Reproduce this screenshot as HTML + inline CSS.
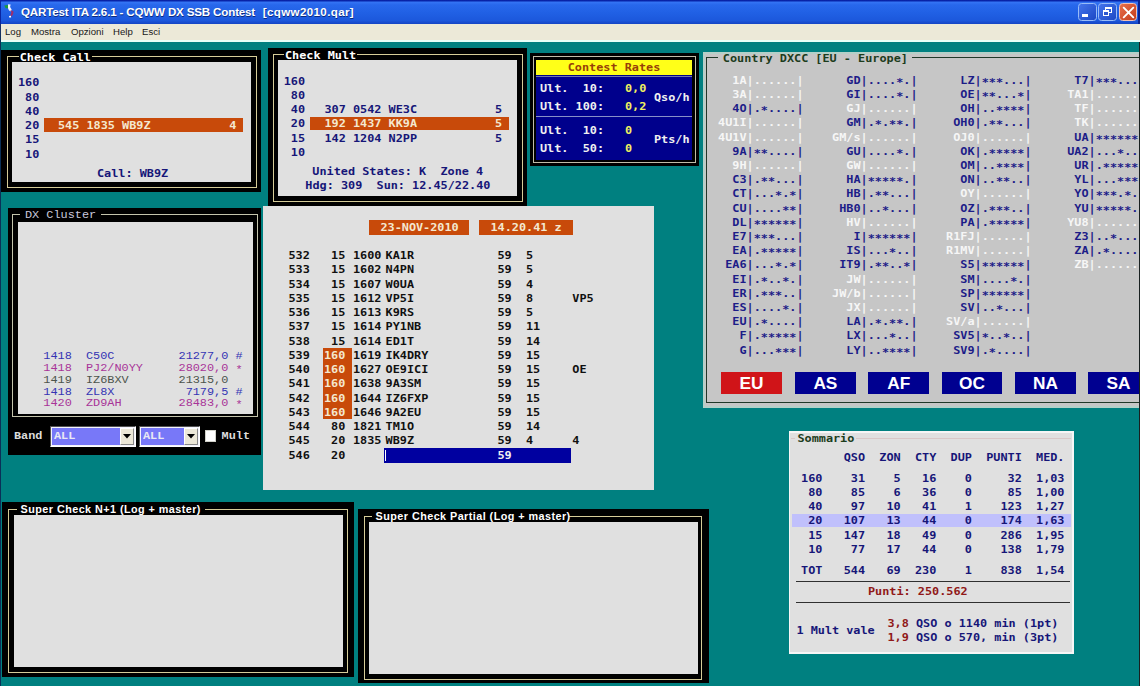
<!DOCTYPE html>
<html><head><meta charset="utf-8"><title>QARTest ITA 2.6.1 - CQWW DX SSB Contest</title>
<style>
*{margin:0;padding:0}
html,body{width:1140px;height:686px;overflow:hidden;background:#008080}
#root{position:relative;width:1140px;height:686px;overflow:hidden;background:#008080}
.b,.t,.c,.m,.s,.btn{position:absolute}
.t{font-family:"DejaVu Sans Mono","Liberation Mono",monospace;font-weight:bold;font-size:11.83px;line-height:14.25px;height:14.25px;white-space:pre;letter-spacing:0;transform:scaleY(.94);transform-origin:0 11.2px}
.t i{font-style:normal;position:relative;top:1.6px}
.c{font-family:"Liberation Mono",monospace;font-size:11.875px;line-height:13px;height:13px;white-space:pre;transform:scaleY(.9);transform-origin:0 10.2px}
.c i{font-style:normal;position:relative;top:1.8px}
.cb{font-weight:bold}
.m{font-family:"Liberation Sans",sans-serif;font-size:9.6px;line-height:12px;top:26px;color:#181818;white-space:pre}
.s{font-family:"Liberation Sans",sans-serif;font-weight:bold;font-size:10.8px;letter-spacing:0.45px;line-height:12px;color:#fff;white-space:pre}
.btn{top:372px;width:60.8px;height:21.7px;color:#fff;font-family:"Liberation Sans",sans-serif;font-weight:bold;font-size:17.3px;line-height:23.4px;text-align:center}
#tb{position:absolute;left:0;top:0;width:1140px;height:23.6px;background:linear-gradient(180deg,#06189c 0%,#0a2cb0 4%,#3474f4 9%,#2868ec 20%,#2060e4 55%,#1c58dc 85%,#1444c4 100%)}
.tt{position:absolute;top:5px;font-family:"Liberation Sans",sans-serif;font-weight:bold;font-size:11.6px;line-height:14px;color:#fff;white-space:pre;text-shadow:0.5px 0.5px 0 #0a2a80}
#mb{position:absolute;left:0;top:23.6px;width:1140px;height:18px;background:#ece9d8;border-bottom:2px solid #e8fff8;box-sizing:border-box}
.wb{width:18.6px;height:18.4px;border:1px solid #fff;border-radius:3.5px;box-sizing:border-box}
</style></head>
<body><div id="root">
<div id="tb"></div>
<div class="tt" style="left:21px;letter-spacing:-0.17px">QARTest ITA 2.6.1 - CQWW DX SSB Contest</div>
<div class="tt" style="left:262.8px;letter-spacing:0.35px">[cqww2010.qar]</div>
<svg class="b" style="left:0;top:0" width="18" height="22" viewBox="0 0 18 22"><path d="M4.3 5.6 L8 5 L8 8.2 L5.6 8.2 Z" fill="#1a9a3a"/><path d="M8 4.2 L10.6 4.5 L10.1 7 L11.6 9.6 L11.2 11.6 L9 10.6 L8 8.2 Z" fill="#f2f2ff"/><path d="M10.4 10 L13.6 11.6 L13.1 14 L11.6 16.6 L10.4 15.2 L11.4 12.6 Z" fill="#a02c6c"/><path d="M9 16 L11 15.7 L11.1 17.5 L9.2 17.6Z" fill="#fff"/></svg>
<div class="b wb" style="left:1078.0px;top:3px;background:linear-gradient(135deg,#4474ec,#1c48c4);border-color:#98bcf8"></div>
<div class="b wb" style="left:1098.2px;top:3px;background:linear-gradient(135deg,#4474ec,#1c48c4);border-color:#98bcf8"></div>
<div class="b wb" style="left:1118.6px;top:3px;background:linear-gradient(135deg,#e8704c,#c43c1c);border-color:#f4c0b0"></div>
<div class="b" style="left:1082px;top:13.8px;width:6.4px;height:3px;background:#fff"></div>
<div class="b" style="left:1105.3px;top:7px;width:6.4px;height:5.5px;border:1px solid #fff;border-top-width:2px;box-sizing:border-box"></div>
<div class="b" style="left:1102.5px;top:10px;width:6.6px;height:5.8px;border:1px solid #fff;border-top-width:2px;box-sizing:border-box;background:#2c58d0"></div>
<svg class="b" style="left:1121.5px;top:5.5px" width="13" height="13" viewBox="0 0 13 13"><path d="M1.7 1.7 L11.3 11.3 M11.3 1.7 L1.7 11.3" stroke="#fff" stroke-width="1.9" stroke-linecap="round"/></svg>
<div class="b" style="left:1138.2px;top:0;width:2px;height:42px;background:#0a2490"></div>
<div id="mb"></div>
<div class="m" style="left:5px">Log</div>
<div class="m" style="left:31px">Mostra</div>
<div class="m" style="left:71px">Opzioni</div>
<div class="m" style="left:113px">Help</div>
<div class="m" style="left:142px">Esci</div>
<div class="b" style="left:0;top:0;width:1.2px;height:686px;background:linear-gradient(180deg,#0a24a0 0,#0a24a0 24px,#203068 24px,#0a3058 42px,#0a3058 100%)"></div>
<div class="b" style="left:1.00px;top:50.00px;width:260.00px;height:142.00px;background:#000;"></div>
<div class="b" style="left:7.00px;top:56.00px;width:250.30px;height:131.70px;border:1px solid #d6cc98;box-sizing:border-box"></div>
<div class="b" style="left:12.00px;top:62.00px;width:239.00px;height:119.50px;background:#e0e0e0;"></div>
<div class="b" style="left:19.00px;top:54.00px;width:72.50px;height:6.00px;background:#000;"></div>
<div class="t" style="left:19.70px;top:49.70px;color:#fff;">Check Call</div>
<div class="t" style="left:17.90px;top:75.35px;color:#161678;">160</div>
<div class="t" style="left:17.90px;top:89.60px;color:#161678;"> 80</div>
<div class="t" style="left:17.90px;top:103.85px;color:#161678;"> 40</div>
<div class="t" style="left:17.90px;top:118.10px;color:#161678;"> 20</div>
<div class="t" style="left:17.90px;top:132.35px;color:#161678;"> 15</div>
<div class="t" style="left:17.90px;top:146.60px;color:#161678;"> 10</div>
<div class="b" style="left:44.00px;top:118.00px;width:198.50px;height:14.00px;background:#c84a0a;"></div>
<div class="t" style="left:58.00px;top:118.10px;color:#f4e8d0;">545 1835 WB9Z</div>
<div class="t" style="left:229.30px;top:118.10px;color:#f4e8d0;">4</div>
<div class="t" style="left:97.00px;top:166.30px;color:#161678;">Call: WB9Z</div>
<div class="b" style="left:268.00px;top:48.00px;width:259.00px;height:159.00px;background:#000;"></div>
<div class="b" style="left:273.00px;top:54.00px;width:250.00px;height:148.00px;border:1px solid #d6cc98;box-sizing:border-box"></div>
<div class="b" style="left:277.50px;top:60.00px;width:239.50px;height:136.00px;background:#e0e0e0;"></div>
<div class="b" style="left:284.00px;top:52.00px;width:73.00px;height:6.00px;background:#000;"></div>
<div class="t" style="left:285.00px;top:47.80px;color:#fff;">Check Mult</div>
<div class="t" style="left:283.70px;top:73.50px;color:#161678;">160</div>
<div class="t" style="left:283.70px;top:87.75px;color:#161678;"> 80</div>
<div class="t" style="left:283.70px;top:102.00px;color:#161678;"> 40</div>
<div class="t" style="left:283.70px;top:116.25px;color:#161678;"> 20</div>
<div class="t" style="left:283.70px;top:130.50px;color:#161678;"> 15</div>
<div class="t" style="left:283.70px;top:144.75px;color:#161678;"> 10</div>
<div class="b" style="left:309.50px;top:116.50px;width:199.30px;height:13.40px;background:#c84a0a;"></div>
<div class="t" style="left:324.50px;top:102.00px;color:#161678;">307 0542 WE3C</div>
<div class="t" style="left:495.00px;top:102.00px;color:#161678;">5</div>
<div class="t" style="left:324.50px;top:116.25px;color:#f4e8d0;">192 1437 KK9A</div>
<div class="t" style="left:495.00px;top:116.25px;color:#f4e8d0;">5</div>
<div class="t" style="left:324.50px;top:130.50px;color:#161678;">142 1204 N2PP</div>
<div class="t" style="left:495.00px;top:130.50px;color:#161678;">5</div>
<div class="t" style="left:312.30px;top:164.40px;color:#161678;">United States: K  Zone 4</div>
<div class="t" style="left:305.30px;top:178.15px;color:#161678;">Hdg: 309  Sun: 12.45/22.40</div>
<div class="b" style="left:529.50px;top:52.50px;width:169.50px;height:113.30px;background:#000;"></div>
<div class="b" style="left:533px;top:56.2px;width:163px;height:106.6px;border:1px solid #c0bca8;box-sizing:border-box"></div>
<div class="b" style="left:536.00px;top:59.70px;width:156.00px;height:100.00px;background:#00008c;"></div>
<div class="b" style="left:536.00px;top:59.70px;width:156.00px;height:15.00px;background:#ffff18;"></div>
<div class="b" style="left:536.00px;top:75.60px;width:156.00px;height:1.00px;background:#7078b0;"></div>
<div class="t" style="left:567.70px;top:60.20px;color:#984008;">Contest Rates</div>
<div class="b" style="left:536.00px;top:116.20px;width:156.00px;height:1.20px;background:#8890c8;"></div>
<div class="t" style="left:540.00px;top:81.20px;color:#f0f0f0;">Ult.  10:</div>
<div class="t" style="left:625.00px;top:81.20px;color:#f0f060;">0,0</div>
<div class="t" style="left:540.00px;top:98.60px;color:#f0f0f0;">Ult. 100:</div>
<div class="t" style="left:625.00px;top:98.60px;color:#f0f060;">0,2</div>
<div class="t" style="left:654.00px;top:89.90px;color:#f0f0f0;">Qso/h</div>
<div class="t" style="left:540.00px;top:123.30px;color:#f0f0f0;">Ult.  10:</div>
<div class="t" style="left:625.00px;top:123.30px;color:#f0f060;">0</div>
<div class="t" style="left:540.00px;top:141.20px;color:#f0f0f0;">Ult.  50:</div>
<div class="t" style="left:625.00px;top:141.20px;color:#f0f060;">0</div>
<div class="t" style="left:654.00px;top:132.40px;color:#f0f0f0;">Pts/h</div>
<div class="b" style="left:702.70px;top:52.00px;width:440.00px;height:355.60px;background:#b4d0c8;"></div>
<div class="b" style="left:705.00px;top:54.00px;width:440.00px;height:351.50px;background:#c6c6c6;"></div>
<div class="b" style="left:705.8px;top:57.2px;width:440px;height:345.8px;border:1px solid #203828;box-sizing:border-box"></div>
<div class="b" style="left:718.00px;top:54.00px;width:194.00px;height:8.00px;background:#c6c6c6;"></div>
<div class="t" style="left:722.80px;top:51.10px;color:#1c3c1c;">Country DXCC [EU - Europe]</div>
<div class="t" style="left:711.00px;top:72.90px;color:#f6f6f6;">   1A|......|</div>
<div class="t" style="left:711.00px;top:87.09px;color:#f6f6f6;">   3A|......|</div>
<div class="t" style="left:711.00px;top:101.28px;color:#1c1c88;">   4O|.<i>*</i>....|</div>
<div class="t" style="left:711.00px;top:115.47px;color:#f6f6f6;"> 4U1I|......|</div>
<div class="t" style="left:711.00px;top:129.66px;color:#f6f6f6;"> 4U1V|......|</div>
<div class="t" style="left:711.00px;top:143.85px;color:#1c1c88;">   9A|<i>*</i><i>*</i>....|</div>
<div class="t" style="left:711.00px;top:158.04px;color:#f6f6f6;">   9H|......|</div>
<div class="t" style="left:711.00px;top:172.23px;color:#1c1c88;">   C3|.<i>*</i><i>*</i>...|</div>
<div class="t" style="left:711.00px;top:186.42px;color:#1c1c88;">   CT|...<i>*</i>.<i>*</i>|</div>
<div class="t" style="left:711.00px;top:200.61px;color:#1c1c88;">   CU|....<i>*</i><i>*</i>|</div>
<div class="t" style="left:711.00px;top:214.80px;color:#1c1c88;">   DL|<i>*</i><i>*</i><i>*</i><i>*</i><i>*</i><i>*</i>|</div>
<div class="t" style="left:711.00px;top:228.99px;color:#1c1c88;">   E7|<i>*</i><i>*</i><i>*</i>...|</div>
<div class="t" style="left:711.00px;top:243.18px;color:#1c1c88;">   EA|.<i>*</i><i>*</i><i>*</i><i>*</i><i>*</i>|</div>
<div class="t" style="left:711.00px;top:257.37px;color:#1c1c88;">  EA6|...<i>*</i>.<i>*</i>|</div>
<div class="t" style="left:711.00px;top:271.56px;color:#1c1c88;">   EI|.<i>*</i>..<i>*</i>.|</div>
<div class="t" style="left:711.00px;top:285.75px;color:#1c1c88;">   ER|.<i>*</i><i>*</i><i>*</i>..|</div>
<div class="t" style="left:711.00px;top:299.94px;color:#1c1c88;">   ES|....<i>*</i>.|</div>
<div class="t" style="left:711.00px;top:314.13px;color:#1c1c88;">   EU|.<i>*</i>....|</div>
<div class="t" style="left:711.00px;top:328.32px;color:#1c1c88;">    F|.<i>*</i><i>*</i><i>*</i><i>*</i><i>*</i>|</div>
<div class="t" style="left:711.00px;top:342.51px;color:#1c1c88;">    G|...<i>*</i><i>*</i><i>*</i>|</div>
<div class="t" style="left:825.00px;top:72.90px;color:#1c1c88;">   GD|....<i>*</i>.|</div>
<div class="t" style="left:825.00px;top:87.09px;color:#1c1c88;">   GI|....<i>*</i>.|</div>
<div class="t" style="left:825.00px;top:101.28px;color:#f6f6f6;">   GJ|......|</div>
<div class="t" style="left:825.00px;top:115.47px;color:#1c1c88;">   GM|.<i>*</i>.<i>*</i><i>*</i>.|</div>
<div class="t" style="left:825.00px;top:129.66px;color:#f6f6f6;"> GM/s|......|</div>
<div class="t" style="left:825.00px;top:143.85px;color:#1c1c88;">   GU|....<i>*</i>.|</div>
<div class="t" style="left:825.00px;top:158.04px;color:#f6f6f6;">   GW|......|</div>
<div class="t" style="left:825.00px;top:172.23px;color:#1c1c88;">   HA|<i>*</i><i>*</i><i>*</i><i>*</i><i>*</i>.|</div>
<div class="t" style="left:825.00px;top:186.42px;color:#1c1c88;">   HB|.<i>*</i><i>*</i>...|</div>
<div class="t" style="left:825.00px;top:200.61px;color:#1c1c88;">  HB0|..<i>*</i>...|</div>
<div class="t" style="left:825.00px;top:214.80px;color:#f6f6f6;">   HV|......|</div>
<div class="t" style="left:825.00px;top:228.99px;color:#1c1c88;">    I|<i>*</i><i>*</i><i>*</i><i>*</i><i>*</i><i>*</i>|</div>
<div class="t" style="left:825.00px;top:243.18px;color:#1c1c88;">   IS|...<i>*</i>..|</div>
<div class="t" style="left:825.00px;top:257.37px;color:#1c1c88;">  IT9|.<i>*</i><i>*</i>..<i>*</i>|</div>
<div class="t" style="left:825.00px;top:271.56px;color:#f6f6f6;">   JW|......|</div>
<div class="t" style="left:825.00px;top:285.75px;color:#f6f6f6;"> JW/b|......|</div>
<div class="t" style="left:825.00px;top:299.94px;color:#f6f6f6;">   JX|......|</div>
<div class="t" style="left:825.00px;top:314.13px;color:#1c1c88;">   LA|.<i>*</i>.<i>*</i><i>*</i>.|</div>
<div class="t" style="left:825.00px;top:328.32px;color:#1c1c88;">   LX|...<i>*</i>..|</div>
<div class="t" style="left:825.00px;top:342.51px;color:#1c1c88;">   LY|..<i>*</i><i>*</i><i>*</i><i>*</i>|</div>
<div class="t" style="left:939.00px;top:72.90px;color:#1c1c88;">   LZ|<i>*</i><i>*</i><i>*</i>...|</div>
<div class="t" style="left:939.00px;top:87.09px;color:#1c1c88;">   OE|<i>*</i><i>*</i>...<i>*</i>|</div>
<div class="t" style="left:939.00px;top:101.28px;color:#1c1c88;">   OH|..<i>*</i><i>*</i><i>*</i><i>*</i>|</div>
<div class="t" style="left:939.00px;top:115.47px;color:#1c1c88;">  OH0|.<i>*</i><i>*</i>...|</div>
<div class="t" style="left:939.00px;top:129.66px;color:#f6f6f6;">  OJ0|......|</div>
<div class="t" style="left:939.00px;top:143.85px;color:#1c1c88;">   OK|.<i>*</i><i>*</i><i>*</i><i>*</i><i>*</i>|</div>
<div class="t" style="left:939.00px;top:158.04px;color:#1c1c88;">   OM|..<i>*</i><i>*</i><i>*</i><i>*</i>|</div>
<div class="t" style="left:939.00px;top:172.23px;color:#1c1c88;">   ON|..<i>*</i><i>*</i>..|</div>
<div class="t" style="left:939.00px;top:186.42px;color:#f6f6f6;">   OY|......|</div>
<div class="t" style="left:939.00px;top:200.61px;color:#1c1c88;">   OZ|.<i>*</i><i>*</i><i>*</i>..|</div>
<div class="t" style="left:939.00px;top:214.80px;color:#1c1c88;">   PA|.<i>*</i><i>*</i><i>*</i><i>*</i><i>*</i>|</div>
<div class="t" style="left:939.00px;top:228.99px;color:#f6f6f6;"> R1FJ|......|</div>
<div class="t" style="left:939.00px;top:243.18px;color:#f6f6f6;"> R1MV|......|</div>
<div class="t" style="left:939.00px;top:257.37px;color:#1c1c88;">   S5|<i>*</i><i>*</i><i>*</i><i>*</i><i>*</i><i>*</i>|</div>
<div class="t" style="left:939.00px;top:271.56px;color:#1c1c88;">   SM|....<i>*</i>.|</div>
<div class="t" style="left:939.00px;top:285.75px;color:#1c1c88;">   SP|<i>*</i><i>*</i><i>*</i><i>*</i><i>*</i><i>*</i>|</div>
<div class="t" style="left:939.00px;top:299.94px;color:#1c1c88;">   SV|..<i>*</i>...|</div>
<div class="t" style="left:939.00px;top:314.13px;color:#f6f6f6;"> SV/a|......|</div>
<div class="t" style="left:939.00px;top:328.32px;color:#1c1c88;">  SV5|<i>*</i>..<i>*</i>..|</div>
<div class="t" style="left:939.00px;top:342.51px;color:#1c1c88;">  SV9|.<i>*</i>....|</div>
<div class="t" style="left:1053.00px;top:72.90px;color:#1c1c88;">   T7|<i>*</i><i>*</i><i>*</i>...|</div>
<div class="t" style="left:1053.00px;top:87.09px;color:#f6f6f6;">  TA1|......|</div>
<div class="t" style="left:1053.00px;top:101.28px;color:#f6f6f6;">   TF|......|</div>
<div class="t" style="left:1053.00px;top:115.47px;color:#f6f6f6;">   TK|......|</div>
<div class="t" style="left:1053.00px;top:129.66px;color:#1c1c88;">   UA|<i>*</i><i>*</i><i>*</i><i>*</i><i>*</i><i>*</i>|</div>
<div class="t" style="left:1053.00px;top:143.85px;color:#1c1c88;">  UA2|...<i>*</i>..|</div>
<div class="t" style="left:1053.00px;top:158.04px;color:#1c1c88;">   UR|.<i>*</i><i>*</i><i>*</i><i>*</i><i>*</i>|</div>
<div class="t" style="left:1053.00px;top:172.23px;color:#1c1c88;">   YL|...<i>*</i><i>*</i><i>*</i>|</div>
<div class="t" style="left:1053.00px;top:186.42px;color:#1c1c88;">   YO|<i>*</i><i>*</i><i>*</i>.<i>*</i>.|</div>
<div class="t" style="left:1053.00px;top:200.61px;color:#1c1c88;">   YU|<i>*</i><i>*</i><i>*</i><i>*</i><i>*</i>.|</div>
<div class="t" style="left:1053.00px;top:214.80px;color:#f6f6f6;">  YU8|......|</div>
<div class="t" style="left:1053.00px;top:228.99px;color:#1c1c88;">   Z3|..<i>*</i>...|</div>
<div class="t" style="left:1053.00px;top:243.18px;color:#1c1c88;">   ZA|.<i>*</i>....|</div>
<div class="t" style="left:1053.00px;top:257.37px;color:#f6f6f6;">   ZB|......|</div>
<div class="btn" style="left:721.0px;background:#d01418">EU</div>
<div class="btn" style="left:795.0px;background:#000090">AS</div>
<div class="btn" style="left:868.3px;background:#000090">AF</div>
<div class="btn" style="left:941.5px;background:#000090">OC</div>
<div class="btn" style="left:1015.0px;background:#000090">NA</div>
<div class="btn" style="left:1088.2px;background:#000090">SA</div>
<div class="b" style="left:7.50px;top:207.50px;width:253.50px;height:247.70px;background:#000;"></div>
<div class="b" style="left:12.00px;top:214.10px;width:246.00px;height:202.90px;border:1px solid #c4c4ac;box-sizing:border-box"></div>
<div class="b" style="left:18.00px;top:222.00px;width:234.50px;height:191.70px;background:#e0e0e0;"></div>
<div class="b" style="left:20.00px;top:210.00px;width:81.00px;height:9.00px;background:#000;"></div>
<div class="c" style="left:25px;top:208.80px;color:#c8c8dc">DX Cluster</div>
<div class="c" style="left:43.3px;top:349.80px;color:#3434b4">1418  C50C         21277,0 #</div>
<div class="c" style="left:43.3px;top:361.72px;color:#a83498">1418  PJ2/N0YY     28020,0 <i>*</i></div>
<div class="c" style="left:43.3px;top:373.64px;color:#4c544c">1419  IZ6BXV       21315,0</div>
<div class="c" style="left:43.3px;top:385.56px;color:#3434b4">1418  ZL8X          7179,5 #</div>
<div class="c" style="left:43.3px;top:397.48px;color:#a83498">1420  ZD9AH        28483,0 <i>*</i></div>
<div class="c cb" style="left:14px;top:430.20px;color:#dcdcdc">Band</div>
<div class="c cb" style="left:221.6px;top:430.20px;color:#dcdcdc">Mult</div>
<div class="b" style="left:50.0px;top:425.5px;width:85.5px;height:21px;background:#f4f4fc;box-sizing:border-box;border:1px solid #fff;border-top-color:#505050;border-left-color:#505050"></div>
<div class="b" style="left:52.00px;top:427.50px;width:68.50px;height:17.00px;background:#7878f8;"></div>
<div class="c cb" style="left:54.0px;top:430.40px;color:#e8e8f4">ALL</div>
<div class="b" style="left:119.5px;top:427.5px;width:14px;height:17px;background:#ece8d8;border:1px solid #fff;border-right-color:#888;border-bottom-color:#888;box-sizing:border-box"></div>
<svg class="b" style="left:122.5px;top:433.5px" width="8" height="5" viewBox="0 0 8 5"><path d="M0 0 L8 0 L4 4.5Z" fill="#000"/></svg>
<div class="b" style="left:139.0px;top:425.5px;width:61.0px;height:21px;background:#f4f4fc;box-sizing:border-box;border:1px solid #fff;border-top-color:#505050;border-left-color:#505050"></div>
<div class="b" style="left:141.00px;top:427.50px;width:44.00px;height:17.00px;background:#7878f8;"></div>
<div class="c cb" style="left:143.0px;top:430.40px;color:#e8e8f4">ALL</div>
<div class="b" style="left:184.0px;top:427.5px;width:14px;height:17px;background:#ece8d8;border:1px solid #fff;border-right-color:#888;border-bottom-color:#888;box-sizing:border-box"></div>
<svg class="b" style="left:187.0px;top:433.5px" width="8" height="5" viewBox="0 0 8 5"><path d="M0 0 L8 0 L4 4.5Z" fill="#000"/></svg>
<div class="b" style="left:204.7px;top:430px;width:11.7px;height:11.5px;background:#fff;border:1px solid #d0d0c8;box-sizing:border-box"></div>
<div class="b" style="left:263.00px;top:206.00px;width:391.00px;height:284.00px;background:#e0e0e0;"></div>
<div class="b" style="left:368.90px;top:220.00px;width:100.50px;height:14.50px;background:#c84a0a;"></div>
<div class="b" style="left:479.30px;top:220.00px;width:93.80px;height:14.50px;background:#c84a0a;"></div>
<div class="t" style="left:380.40px;top:220.30px;color:#f4e8d0;">23-NOV-2010</div>
<div class="t" style="left:490.50px;top:220.30px;color:#f4e8d0;">14.20.41 z</div>
<div class="b" style="left:322.50px;top:347.70px;width:29.50px;height:71.25px;background:#c84a0a;"></div>
<div class="t" style="left:288.40px;top:248.10px;color:#101010;">532</div>
<div class="t" style="left:324.00px;top:248.10px;color:#101010;"> 15</div>
<div class="t" style="left:353.00px;top:248.10px;color:#101010;">1600</div>
<div class="t" style="left:385.60px;top:248.10px;color:#101010;">KA1R</div>
<div class="t" style="left:497.50px;top:248.10px;color:#101010;">59  5</div>
<div class="t" style="left:288.40px;top:262.35px;color:#101010;">533</div>
<div class="t" style="left:324.00px;top:262.35px;color:#101010;"> 15</div>
<div class="t" style="left:353.00px;top:262.35px;color:#101010;">1602</div>
<div class="t" style="left:385.60px;top:262.35px;color:#101010;">N4PN</div>
<div class="t" style="left:497.50px;top:262.35px;color:#101010;">59  5</div>
<div class="t" style="left:288.40px;top:276.60px;color:#101010;">534</div>
<div class="t" style="left:324.00px;top:276.60px;color:#101010;"> 15</div>
<div class="t" style="left:353.00px;top:276.60px;color:#101010;">1607</div>
<div class="t" style="left:385.60px;top:276.60px;color:#101010;">W0UA</div>
<div class="t" style="left:497.50px;top:276.60px;color:#101010;">59  4</div>
<div class="t" style="left:288.40px;top:290.85px;color:#101010;">535</div>
<div class="t" style="left:324.00px;top:290.85px;color:#101010;"> 15</div>
<div class="t" style="left:353.00px;top:290.85px;color:#101010;">1612</div>
<div class="t" style="left:385.60px;top:290.85px;color:#101010;">VP5I</div>
<div class="t" style="left:497.50px;top:290.85px;color:#101010;">59  8</div>
<div class="t" style="left:572.30px;top:290.85px;color:#101010;">VP5</div>
<div class="t" style="left:288.40px;top:305.10px;color:#101010;">536</div>
<div class="t" style="left:324.00px;top:305.10px;color:#101010;"> 15</div>
<div class="t" style="left:353.00px;top:305.10px;color:#101010;">1613</div>
<div class="t" style="left:385.60px;top:305.10px;color:#101010;">K9RS</div>
<div class="t" style="left:497.50px;top:305.10px;color:#101010;">59  5</div>
<div class="t" style="left:288.40px;top:319.35px;color:#101010;">537</div>
<div class="t" style="left:324.00px;top:319.35px;color:#101010;"> 15</div>
<div class="t" style="left:353.00px;top:319.35px;color:#101010;">1614</div>
<div class="t" style="left:385.60px;top:319.35px;color:#101010;">PY1NB</div>
<div class="t" style="left:497.50px;top:319.35px;color:#101010;">59  11</div>
<div class="t" style="left:288.40px;top:333.60px;color:#101010;">538</div>
<div class="t" style="left:324.00px;top:333.60px;color:#101010;"> 15</div>
<div class="t" style="left:353.00px;top:333.60px;color:#101010;">1614</div>
<div class="t" style="left:385.60px;top:333.60px;color:#101010;">ED1T</div>
<div class="t" style="left:497.50px;top:333.60px;color:#101010;">59  14</div>
<div class="t" style="left:288.40px;top:347.85px;color:#101010;">539</div>
<div class="t" style="left:324.00px;top:347.85px;color:#f4e8d0;">160</div>
<div class="t" style="left:353.00px;top:347.85px;color:#101010;">1619</div>
<div class="t" style="left:385.60px;top:347.85px;color:#101010;">IK4DRY</div>
<div class="t" style="left:497.50px;top:347.85px;color:#101010;">59  15</div>
<div class="t" style="left:288.40px;top:362.10px;color:#101010;">540</div>
<div class="t" style="left:324.00px;top:362.10px;color:#f4e8d0;">160</div>
<div class="t" style="left:353.00px;top:362.10px;color:#101010;">1627</div>
<div class="t" style="left:385.60px;top:362.10px;color:#101010;">OE9ICI</div>
<div class="t" style="left:497.50px;top:362.10px;color:#101010;">59  15</div>
<div class="t" style="left:572.30px;top:362.10px;color:#101010;">OE</div>
<div class="t" style="left:288.40px;top:376.35px;color:#101010;">541</div>
<div class="t" style="left:324.00px;top:376.35px;color:#f4e8d0;">160</div>
<div class="t" style="left:353.00px;top:376.35px;color:#101010;">1638</div>
<div class="t" style="left:385.60px;top:376.35px;color:#101010;">9A3SM</div>
<div class="t" style="left:497.50px;top:376.35px;color:#101010;">59  15</div>
<div class="t" style="left:288.40px;top:390.60px;color:#101010;">542</div>
<div class="t" style="left:324.00px;top:390.60px;color:#f4e8d0;">160</div>
<div class="t" style="left:353.00px;top:390.60px;color:#101010;">1644</div>
<div class="t" style="left:385.60px;top:390.60px;color:#101010;">IZ6FXP</div>
<div class="t" style="left:497.50px;top:390.60px;color:#101010;">59  15</div>
<div class="t" style="left:288.40px;top:404.85px;color:#101010;">543</div>
<div class="t" style="left:324.00px;top:404.85px;color:#f4e8d0;">160</div>
<div class="t" style="left:353.00px;top:404.85px;color:#101010;">1646</div>
<div class="t" style="left:385.60px;top:404.85px;color:#101010;">9A2EU</div>
<div class="t" style="left:497.50px;top:404.85px;color:#101010;">59  15</div>
<div class="t" style="left:288.40px;top:419.10px;color:#101010;">544</div>
<div class="t" style="left:324.00px;top:419.10px;color:#101010;"> 80</div>
<div class="t" style="left:353.00px;top:419.10px;color:#101010;">1821</div>
<div class="t" style="left:385.60px;top:419.10px;color:#101010;">TM1O</div>
<div class="t" style="left:497.50px;top:419.10px;color:#101010;">59  14</div>
<div class="t" style="left:288.40px;top:433.35px;color:#101010;">545</div>
<div class="t" style="left:324.00px;top:433.35px;color:#101010;"> 20</div>
<div class="t" style="left:353.00px;top:433.35px;color:#101010;">1835</div>
<div class="t" style="left:385.60px;top:433.35px;color:#101010;">WB9Z</div>
<div class="t" style="left:497.50px;top:433.35px;color:#101010;">59  4</div>
<div class="t" style="left:572.30px;top:433.35px;color:#101010;">4</div>
<div class="t" style="left:288.40px;top:447.60px;color:#101010;">546</div>
<div class="t" style="left:324.00px;top:447.60px;color:#101010;"> 20</div>
<div class="b" style="left:383.50px;top:448.00px;width:187.40px;height:14.70px;background:#0000a0;"></div>
<div class="b" style="left:385.30px;top:449.50px;width:1.00px;height:11.50px;background:#fff;"></div>
<div class="t" style="left:497.50px;top:447.60px;color:#f0f0f0;">59</div>
<div class="b" style="left:2.00px;top:502.00px;width:352.00px;height:175.00px;background:#000;"></div>
<div class="b" style="left:8.00px;top:508.50px;width:340.00px;height:164.50px;border:1px solid #d6cc98;box-sizing:border-box"></div>
<div class="b" style="left:14.00px;top:515.00px;width:329.20px;height:152.00px;background:#e0e0e0;"></div>
<div class="b" style="left:17.00px;top:505.00px;width:188.00px;height:8.00px;background:#000;"></div>
<div class="s" style="left:20.6px;top:502.80px">Super Check N+1 (Log + master)</div>
<div class="b" style="left:358.00px;top:509.20px;width:350.70px;height:174.30px;background:#000;"></div>
<div class="b" style="left:363.50px;top:515.70px;width:338.70px;height:164.20px;border:1px solid #d6cc98;box-sizing:border-box"></div>
<div class="b" style="left:368.60px;top:522.20px;width:329.30px;height:152.00px;background:#e0e0e0;"></div>
<div class="b" style="left:372.00px;top:512.00px;width:197.00px;height:8.00px;background:#000;"></div>
<div class="s" style="left:375.6px;top:510.00px">Super Check Partial (Log + master)</div>
<div class="b" style="left:788.70px;top:431.40px;width:285.50px;height:222.30px;background:#f6f6f6;"></div>
<div class="b" style="left:790.40px;top:433.20px;width:281.80px;height:218.60px;background:#e0e0e0;"></div>
<div class="b" style="left:791.00px;top:438.30px;width:279.50px;height:1.00px;background:#d8c8c8;"></div>
<div class="b" style="left:795.00px;top:434.00px;width:61.00px;height:9.00px;background:#e0e0e0;"></div>
<div class="t" style="left:797.40px;top:431.20px;color:#1c3c1c;">Sommario</div>
<div class="t" style="left:793.90px;top:449.60px;color:#161678;">       QSO  ZON  CTY  DUP  PUNTI  MED.</div>
<div class="b" style="left:791.50px;top:513.50px;width:279.20px;height:13.10px;background:#c0c0fc;"></div>
<div class="t" style="left:793.90px;top:470.90px;color:#161678;"> 160    31    5   16    0     32  1,03</div>
<div class="t" style="left:793.90px;top:485.05px;color:#161678;">  80    85    6   36    0     85  1,00</div>
<div class="t" style="left:793.90px;top:499.20px;color:#161678;">  40    97   10   41    1    123  1,27</div>
<div class="t" style="left:793.90px;top:513.35px;color:#161678;">  20   107   13   44    0    174  1,63</div>
<div class="t" style="left:793.90px;top:527.50px;color:#161678;">  15   147   18   49    0    286  1,95</div>
<div class="t" style="left:793.90px;top:541.65px;color:#161678;">  10    77   17   44    0    138  1,79</div>
<div class="t" style="left:793.90px;top:563.00px;color:#161678;"> TOT   544   69  230    1    838  1,54</div>
<div class="b" style="left:796.00px;top:580.60px;width:273.50px;height:1.00px;background:#303030;"></div>
<div class="t" style="left:868.00px;top:583.80px;color:#901818;">Punti: 250.562</div>
<div class="b" style="left:796.00px;top:601.80px;width:273.50px;height:1.00px;background:#303030;"></div>
<div class="t" style="left:796.40px;top:623.40px;color:#161678;">1 Mult vale</div>
<div class="t" style="left:887.50px;top:616.10px;color:#901818;">3,8</div>
<div class="t" style="left:908.88px;top:616.10px;color:#161678;"> QSO o 1140 min (1pt)</div>
<div class="t" style="left:887.50px;top:630.40px;color:#901818;">1,9</div>
<div class="t" style="left:908.88px;top:630.40px;color:#161678;"> QSO o 570, min (3pt)</div>
<div class="b" style="left:1138.5px;top:42px;width:1.5px;height:644px;background:#182020"></div>
</div></body></html>
